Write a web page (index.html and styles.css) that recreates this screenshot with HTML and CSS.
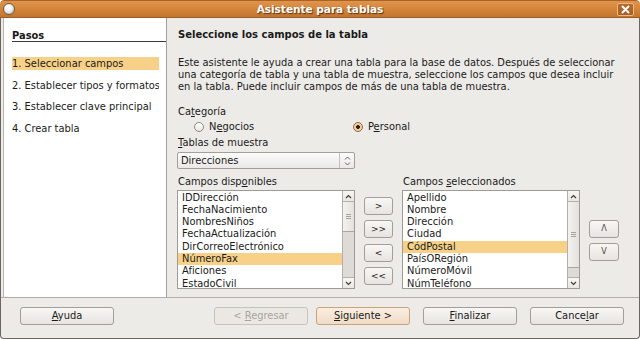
FILE: index.html
```html
<!DOCTYPE html>
<html lang="es">
<head>
<meta charset="utf-8">
<title>Asistente para tablas</title>
<link rel="stylesheet" href="styles.css">
</head>
<body>
<div class="window">
  <div class="titlebar">
    <div class="tb-left"><span class="app-icon"></span></div>
    <div class="title">Asistente para tablas</div>
    <div class="tb-right">
      <span class="close">
        <svg width="9" height="9" viewBox="0 0 9 9"><path d="M1.5 1.5 L7.5 7.5 M7.5 1.5 L1.5 7.5" stroke="#fff" stroke-width="2" stroke-linecap="round"/></svg>
      </span>
    </div>
  </div>
  <div class="frame">
    <div class="main">
      <div class="steps">
        <div class="steps-title">Pasos</div>
        <ul class="step-list">
          <li class="step active">1. Seleccionar campos</li>
          <li class="step">2. Establecer tipos y formatos</li>
          <li class="step">3. Establecer clave principal</li>
          <li class="step">4. Crear tabla</li>
        </ul>
      </div>
      <div class="content">
        <h1 class="heading">Seleccione los campos de la tabla</h1>
        <p class="intro">Este asistente le ayuda a crear una tabla para la base de datos. Después de seleccionar<br>una categoría de tabla y una tabla de muestra, seleccione los campos que desea incluir<br>en la tabla. Puede incluir campos de más de una tabla de muestra.</p>
        <div class="label cat-label">Ca<u>t</u>egoría</div>
        <div class="radios">
          <div class="radio"><span class="dot"></span><span>N<u>e</u>gocios</span></div>
          <div class="radio checked"><span class="dot"></span><span>P<u>e</u>rsonal</span></div>
        </div>
        <div class="label tab-label"><u>T</u>ablas de muestra</div>
        <div class="select">
          <span class="select-text">Direcciones</span>
          <span class="spin">
            <svg width="7" height="10" viewBox="0 0 7 10"><path d="M1 3.5 L3.5 1 L6 3.5 M1 6.5 L3.5 9 L6 6.5" fill="none" stroke="#6a6660" stroke-width="1"/></svg>
          </span>
        </div>
        <div class="fields">
          <div class="col">
            <div class="label">Campos disp<u>o</u>nibles</div>
            <div class="listbox">
              <ul class="items">
                <li>IDDirección</li>
                <li>FechaNacimiento</li>
                <li>NombresNiños</li>
                <li>FechaActualización</li>
                <li>DirCorreoElectrónico</li>
                <li class="sel">NúmeroFax</li>
                <li>Aficiones</li>
                <li>EstadoCivil</li>
              </ul>
              <div class="scrollbar">
                <div class="sb-btn"><svg width="7" height="5" viewBox="0 0 7 5"><path d="M1 4 L3.5 1.5 L6 4" fill="none" stroke="#3c3a37" stroke-width="1.1"/></svg></div>
                <div class="sb-thumb short"><span class="grip"></span></div>
                <div class="sb-trough"></div>
                <div class="sb-btn down"><svg width="7" height="5" viewBox="0 0 7 5"><path d="M1 1 L3.5 3.5 L6 1" fill="none" stroke="#3c3a37" stroke-width="1.1"/></svg></div>
              </div>
            </div>
          </div>
          <div class="movebtns">
            <div class="btn small">&gt;</div>
            <div class="btn small">&gt;&gt;</div>
            <div class="btn small">&lt;</div>
            <div class="btn small">&lt;&lt;</div>
          </div>
          <div class="col">
            <div class="label">Campos <u>s</u>eleccionados</div>
            <div class="listbox">
              <ul class="items">
                <li>Apellido</li>
                <li>Nombre</li>
                <li>Dirección</li>
                <li>Ciudad</li>
                <li class="sel">CódPostal</li>
                <li>PaísORegión</li>
                <li>NúmeroMóvil</li>
                <li>NúmTeléfono</li>
              </ul>
              <div class="scrollbar">
                <div class="sb-btn"><svg width="7" height="5" viewBox="0 0 7 5"><path d="M1 4 L3.5 1.5 L6 4" fill="none" stroke="#3c3a37" stroke-width="1.1"/></svg></div>
                <div class="sb-thumb long"><span class="grip"></span></div>
                <div class="sb-trough"></div>
                <div class="sb-btn down"><svg width="7" height="5" viewBox="0 0 7 5"><path d="M1 1 L3.5 3.5 L6 1" fill="none" stroke="#3c3a37" stroke-width="1.1"/></svg></div>
              </div>
            </div>
          </div>
          <div class="orderbtns">
            <div class="btn small">&#923;</div>
            <div class="btn small">V</div>
          </div>
        </div>
      </div>
    </div>
    <div class="footer">
      <div class="btn"><span><u>A</u>yuda</span></div>
      <div class="spacer"></div>
      <div class="btn disabled"><span>&lt; <u>R</u>egresar</span></div>
      <div class="btn default"><span><u>S</u>iguiente &gt;</span></div>
      <div class="btn wide-gap"><span><u>F</u>inalizar</span></div>
      <div class="btn wide-gap"><span>Cance<u>l</u>ar</span></div>
    </div>
  </div>
</div>
</body>
</html>
```

FILE: styles.css
```css
* { box-sizing: border-box; margin: 0; padding: 0; }
html, body { width: 640px; height: 339px; overflow: hidden; background: #ffffff; }
body {
  font-family: "DejaVu Sans", "Liberation Sans", sans-serif;
  font-size: 9.9px;
  line-height: 12px;
  color: #1a1a1a;
}
u { text-decoration: underline; text-underline-offset: 1px; }
ul { list-style: none; }

.window {
  width: 640px;
  height: 339px;
  display: flex;
  flex-direction: column;
  border-radius: 4px 4px 0 0;
  overflow: hidden;
}

/* Title bar */
.titlebar {
  height: 18px;
  flex: none;
  display: grid;
  grid-template-columns: 1fr auto 1fr;
  align-items: center;
  background: linear-gradient(#e09549 0%, #d4853c 50%, #c2732d 100%);
  border-top: 1px solid #a9632a;
  border-bottom: 1px solid #9d5b25;
  border-radius: 4px 4px 0 0;
}
.tb-left { display: flex; padding-left: 3px; }
.app-icon {
  width: 12px;
  height: 12px;
  border-radius: 50%;
  border: 1px solid #6c5a48;
  background: radial-gradient(circle at 40% 35%, #ffffff 0 25%, #dcdcdc 60%, #a9a9a9 100%);
}
.title {
  color: #ffffff;
  font-weight: bold;
  font-size: 10.5px;
  text-shadow: 1px 1px 1px rgba(60, 25, 0, 0.75);
}
.tb-right { display: flex; justify-content: flex-end; padding-right: 6px; }
.close {
  width: 17px;
  height: 13px;
  display: flex;
  align-items: center;
  justify-content: center;
  border: 1px solid #e9b987;
  border-radius: 2px;
  background: linear-gradient(#b9692a, #a95e24);
}

/* Frame */
.frame {
  flex: 1;
  display: flex;
  flex-direction: column;
  background: #edebe8;
  border: 1px solid #6b6660;
  border-top: none;
  border-radius: 0 0 4px 4px;
}
.main {
  height: 279px;
  flex: none;
  display: flex;
  padding-left: 2px;
}

/* Steps panel */
.steps {
  width: 164px;
  flex: none;
  background: #ffffff;
  border-left: 1px solid #b8b4ae;
  border-right: 1px solid #a29e98;
  padding-left: 8px;
}
.steps-title {
  margin-top: 12px;
  line-height: 11px;
  font-weight: bold;
  border-bottom: 1px solid #3a3a3a;
}
.step-list {
  margin-top: 15px;
  display: flex;
  flex-direction: column;
  gap: 8.7px;
}
.step {
  width: 147px;
  height: 13px;
  line-height: 13px;
  white-space: nowrap;
  overflow: hidden;
}
.step.active { background: #f8d188; }

/* Content */
.content {
  flex: 1;
  padding: 11px 0 0 11px;
  display: flex;
  flex-direction: column;
}
.heading {
  font-size: 10px;
  line-height: 12px;
  font-weight: bold;
}
.intro {
  margin-top: 16px;
  white-space: nowrap;
}
.label { white-space: nowrap; }
.cat-label { margin-top: 13px; }
.radios {
  margin-top: 1px;
  height: 16px;
  display: flex;
  align-items: center;
  padding-left: 16px;
}
.radio {
  display: flex;
  align-items: center;
  gap: 5px;
  width: 159px;
}
.dot {
  width: 10px;
  height: 10px;
  border-radius: 50%;
  border: 1px solid #8e8a84;
  background: linear-gradient(#ffffff, #e9e7e3);
  flex: none;
}
.radio.checked .dot {
  border-color: #8a6a48;
  background: radial-gradient(circle, #2a2118 0 1.6px, #f6c98f 2.2px, #f9dcb6 100%);
}
.tab-label { margin-top: 2px; }
.select {
  margin-top: 3px;
  margin-left: -1px;
  width: 178px;
  height: 17px;
  display: flex;
  align-items: center;
  border: 1px solid #a39f99;
  border-radius: 2px;
  background: linear-gradient(#fbfbfa, #ebe9e6);
}
.select-text { flex: 1; padding-left: 3px; }
.spin {
  width: 15px;
  height: 15px;
  border-left: 1px solid #c4c0ba;
  display: flex;
  align-items: center;
  justify-content: center;
}

/* Fields */
.fields {
  margin-top: 7px;
  margin-left: -1px;
  display: flex;
  align-items: flex-start;
  gap: 9px;
}
.col { width: 178px; flex: none; }
.col .label { padding-left: 1px; }
.listbox {
  margin-top: 2px;
  height: 99px;
  display: flex;
  border: 1px solid #9e9a94;
  background: #ffffff;
}
.items {
  flex: 1;
  padding-top: 0.5px;
  line-height: 12.3px;
  white-space: nowrap;
  overflow: hidden;
}
.items li { padding-left: 4px; height: 12.3px; }
.items li.sel { background: #f8d188; }

.scrollbar {
  width: 12px;
  flex: none;
  display: flex;
  flex-direction: column;
  border-left: 1px solid #b3afa9;
  background: #dedad5;
}
.sb-btn {
  height: 11px;
  display: flex;
  align-items: center;
  justify-content: center;
  background: linear-gradient(#f7f6f4, #e9e7e3);
  border-bottom: 1px solid #b3afa9;
}
.sb-btn.down { border-bottom: none; border-top: 1px solid #b3afa9; }
.sb-thumb {
  display: flex;
  align-items: center;
  justify-content: center;
  background: linear-gradient(90deg, #f3f2f0, #e4e1dd);
  border-bottom: 1px solid #a9a59f;
}
.sb-thumb.short { height: 30px; }
.sb-thumb.long { height: 66px; }
.grip {
  width: 5px;
  height: 5px;
  background: repeating-linear-gradient(#a6a29c 0 1px, transparent 1px 2px);
}
.sb-trough { flex: 1; }

/* Buttons */
.btn {
  width: 94px;
  height: 18px;
  flex: none;
  display: flex;
  align-items: center;
  justify-content: center;
  border: 1px solid #a29e98;
  border-radius: 3px;
  background: linear-gradient(#f8f7f5, #e7e4e0);
  white-space: nowrap;
}
.btn.small { width: 29px; font-size: 9px; }
.movebtns {
  margin-top: 21px;
  display: flex;
  flex-direction: column;
  gap: 5.3px;
}
.orderbtns {
  margin-top: 44px;
  display: flex;
  flex-direction: column;
  gap: 5px;
}
.orderbtns .btn { width: 30px; font-size: 8px; color: #4a4742; }

/* Footer */
.footer {
  flex: 1;
  display: flex;
  align-items: flex-start;
  border-top: 1px solid #b1ada7;
  padding: 9px 15px 0 19px;
}
.spacer { flex: 1; }
.btn.disabled {
  color: #a8a49f;
  border-color: #c7c3bd;
  background: #ebe8e4;
  margin-right: 8px;
}
.btn.default {
  background: linear-gradient(#faeee1, #f0dcc5);
  border-color: #c9a37d;
}
.btn.wide-gap { margin-left: 13px; }
```
